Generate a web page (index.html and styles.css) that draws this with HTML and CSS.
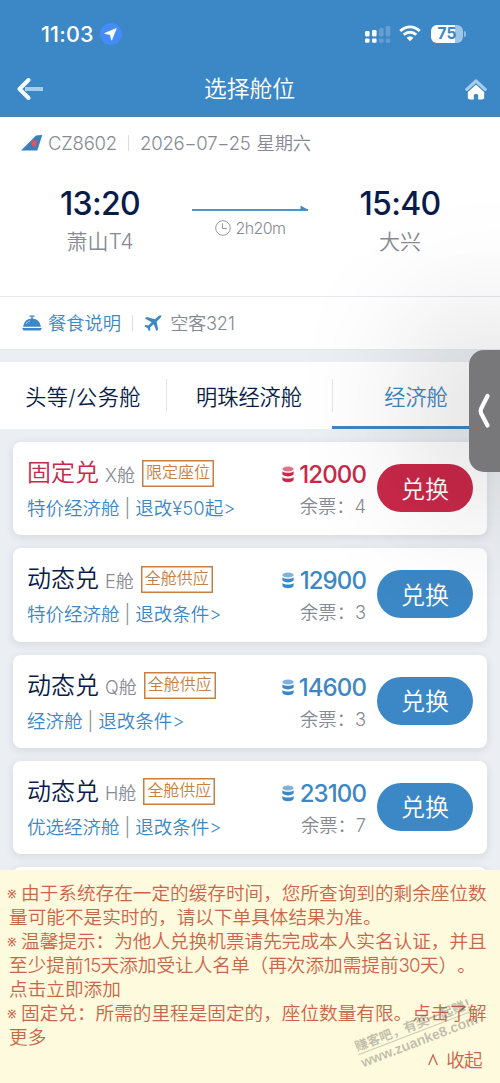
FILE: index.html
```html
<!DOCTYPE html>
<html lang="zh-CN">
<head>
<meta charset="utf-8">
<title>选择舱位</title>
<link rel="stylesheet" href="styles.css">
</head>
<body>
<svg class="defs" width="0" height="0">
  <symbol id="coins" viewBox="0 0 12 17">
    <ellipse cx="6" cy="3" rx="5.6" ry="2.5" opacity=".65"/>
    <path d="M.4 5.2C2.5 7.2 9.5 7.2 11.6 5.2V8.6C9.8 11 2.2 11 .4 8.6Z"/>
    <path d="M.4 10.9C2.5 12.9 9.5 12.9 11.6 10.9V14C9.8 16.9 2.2 16.9 .4 14Z"/>
  </symbol>
</svg>
<div class="app">
  <header class="header">
    <div class="status">
      <div class="clock"><span class="clock-text">11:03</span>
        <svg width="22" height="22" viewBox="0 0 22 22"><circle cx="11" cy="11" r="11" fill="#438cfa"/><path d="M16.2 5.6 4.6 10.4 10.3 11.5 11.6 17.2Z" fill="#fff" stroke="#fff" stroke-width=".8" stroke-linejoin="round"/></svg>
      </div>
      <svg class="signal" width="26" height="18" viewBox="0 0 26 18" fill="#fff"><rect x="0" y="6" width="4.6" height="5.4" rx="1.3"/><rect x="7" y="5" width="4.6" height="6.4" rx="1.3"/><rect x="0" y="13.4" width="4.6" height="4.4" rx="1.3"/><rect x="7" y="13.4" width="4.6" height="4.4" rx="1.3"/><g opacity=".2"><rect x="14" y="3" width="4.6" height="8.4" rx="1.3"/><rect x="20.7" y="1" width="4.6" height="10.4" rx="1.3"/><rect x="14" y="13.4" width="4.6" height="4.4" rx="1.3"/><rect x="20.7" y="13.4" width="4.6" height="4.4" rx="1.3"/></g></svg>
      <svg class="wifi" width="22" height="17" viewBox="0 0 22 17"><g fill="none" stroke="#fff" stroke-width="2.9"><path d="M1.2 6.1C6.8.4 15.2.4 20.8 6.1"/><path d="M4.8 9.8C8.4 6.3 13.6 6.3 17.2 9.8"/></g><path d="M7.6 12.7Q11 9.7 14.4 12.7L11 16.2Z" fill="#fff"/></svg>
      <div class="battery"><span>75</span></div>
      <i class="battery-tip"></i>
    </div>
    <div class="navbar">
      <svg width="27" height="22" viewBox="0 0 27 22" fill="none"><path d="M8 11H26" stroke="#a5cdec" stroke-width="4"/><path d="M11.500 2 2.500 11 11.500 20" stroke="#f4fcff" stroke-width="4" stroke-linecap="round" stroke-linejoin="round"/></svg>
      <h1>选择舱位</h1>
      <svg width="22" height="22" viewBox="0 0 22 22"><path d="M1.8 11.4 11 3 20.2 11.4" fill="none" stroke="#a5cdec" stroke-width="3.2" stroke-linecap="round" stroke-linejoin="round"/><path d="M11 6.8 19.2 14V19.5Q19.2 21.5 17.2 21.5H13.2V17.2Q13.2 16 11 16T8.8 17.2V21.5H4.8Q2.8 21.5 2.8 19.5V14Z" fill="#fff"/></svg>
    </div>
  </header>

  <section class="flight">
    <div class="flight-meta">
      <svg width="22" height="16" viewBox="0 0 22 16"><path d="M0 15.6 14 1.4Q15 .3 17 .2L21.3 0 16.3 15.6Z" fill="#3c80bb"/><path d="M10.5 6.5Q12.5 4 16 5.8L15.5 10 12.8 12.5Q10 10 10.5 6.5Z" fill="#d65567"/></svg>
      <span class="flight-no">CZ8602</span><i class="bar"></i><span class="date">2026−07−25 <b>星期六</b></span>
    </div>
    <div class="route">
      <div class="stop"><div class="time">13:20</div><div class="airport">萧山T4</div></div>
      <div class="leg">
        <svg width="117" height="8" viewBox="0 0 117 8"><path d="M0 6H116" stroke="#4c94ca" stroke-width="2"/><path d="M108.500 1.500 116.500 6H108.500Z" fill="#4189c2"/></svg>
        <div class="duration"><svg width="16" height="16" viewBox="0 0 16 16" fill="none" stroke="#999da3"><circle cx="8" cy="8" r="7.3"/><path d="M7.500 3.500V8.500H12"/></svg><span>2h20m</span></div>
      </div>
      <div class="stop"><div class="time">15:40</div><div class="airport">大兴</div></div>
    </div>
    <div class="services">
      <svg width="20" height="16" viewBox="0 0 20 16" fill="#3c87c5"><path d="M7.500 .5H12.500V1.700H10.700V3.500Q17.500 4 19 11.800H1Q2.500 4 9.300 3.500V1.700H7.500Z"/><path d="M0 13H20L18.500 15.500H1.500Z"/><path d="M4 9Q5.300 6.500 8 6" stroke="#a5cdec" fill="none"/></svg>
      <span class="meal">餐食说明</span><i class="bar"></i>
      <svg class="plane" width="18" height="17" viewBox="0 0 18 17" fill="#3c87c5"><path d="M17.500.3Q15 .2 12.800 2.400L11 4.200 2.600 2 1 3.500 7.700 7.200 4.200 10.600 1.600 10 .3 11.200 3.500 12.900 5 16.300 6.300 15 6 12.500 9.800 9.200 12.400 16 14.100 14.500 12.600 6.600 15.200 4.300Q17.600 2.300 17.500.3Z"/></svg>
      <span class="model">空客321</span>
    </div>
  </section>

  <nav class="tabs">
    <div class="tab first">头等/公务舱</div>
    <div class="tab">明珠经济舱</div>
    <div class="tab active">经济舱</div>
  </nav>

  <main class="list">
    <article class="card fixed">
      <div class="info"><div class="line"><h2>固定兑</h2><span class="cabin">X舱</span><span class="tag">限定座位</span></div><div class="terms">特价经济舱<i>|</i>退改¥50起&gt;</div></div>
      <div class="price"><div class="miles"><svg width="12" height="17"><use href="#coins"/></svg><span>12000</span></div><div class="left">余票：<b>4</b></div></div>
      <button class="redeem">兑换</button>
    </article>
    <article class="card">
      <div class="info"><div class="line"><h2>动态兑</h2><span class="cabin">E舱</span><span class="tag">全舱供应</span></div><div class="terms">特价经济舱<i>|</i>退改条件&gt;</div></div>
      <div class="price"><div class="miles"><svg width="12" height="17"><use href="#coins"/></svg><span>12900</span></div><div class="left">余票：<b>3</b></div></div>
      <button class="redeem">兑换</button>
    </article>
    <article class="card">
      <div class="info"><div class="line"><h2>动态兑</h2><span class="cabin">Q舱</span><span class="tag">全舱供应</span></div><div class="terms">经济舱<i>|</i>退改条件&gt;</div></div>
      <div class="price"><div class="miles"><svg width="12" height="17"><use href="#coins"/></svg><span>14600</span></div><div class="left">余票：<b>3</b></div></div>
      <button class="redeem">兑换</button>
    </article>
    <article class="card">
      <div class="info"><div class="line"><h2>动态兑</h2><span class="cabin">H舱</span><span class="tag">全舱供应</span></div><div class="terms">优选经济舱<i>|</i>退改条件&gt;</div></div>
      <div class="price"><div class="miles"><svg width="12" height="17"><use href="#coins"/></svg><span>23100</span></div><div class="left">余票：<b>7</b></div></div>
      <button class="redeem">兑换</button>
    </article>
    <article class="card"></article>
  </main>

  <footer class="notice">
    <p><i>※</i>由于系统存在一定的缓存时间，您所查询到的剩余座位数<br>量可能不是实时的，请以下单具体结果为准。</p>
    <p><i>※</i>温馨提示：为他人兑换机票请先完成本人实名认证，并且<br>至少提前<span>15</span>天添加受让人名单（再次添加需提前<span>30</span>天）。<br>点击立即添加</p>
    <p><i>※</i>固定兑：所需的里程是固定的，座位数量有限。点击了解<br>更多</p>
    <div class="collapse"><svg width="10" height="12" viewBox="0 0 10 12"><path d="M.7 11 5 1 9.300 11" fill="none" stroke="#cb6549" stroke-width="1.300"/></svg><span>收起</span></div>
    <div class="watermark"><div>赚客吧，有奖一起赚！</div><div class="site">www.zuanke8.com</div></div>
  </footer>
  <div class="shade"><div class="handle"><svg width="14" height="36" viewBox="0 0 14 36"><path d="M10.500 3 4.200 15.500Q3 18 4.200 20.500L10.500 32.500" fill="none" stroke="#fff" stroke-width="4.200" stroke-linecap="round" stroke-linejoin="round"/></svg></div></div>
</div>
</body>
</html>
```

FILE: styles.css
```css
* { box-sizing: border-box; }
body { margin: 0; font-family: Inter, "Noto Sans CJK SC", sans-serif; font-weight: 350; color: #858a93; text-spacing-trim: space-all; }
h1, h2, p { margin: 0; font-weight: inherit; }
i { font-style: normal; }
b { font-weight: inherit; }
svg { flex: none; display: block; }
.defs { position: absolute; }
.app { position: relative; width: 500px; height: 1083px; overflow: hidden; background: #ebeef2; display: flex; flex-direction: column; white-space: nowrap; }

.header { height: 117px; flex: none; background: #3c87c5; border-bottom: 1px solid #4c83b0; color: #fff; }
.status { height: 67px; display: flex; align-items: center; padding: 0 34px 0 41px; }
.clock { flex: 1; display: flex; align-items: center; gap: 5px; }
.clock-text { width: 54px; font-size: 21.500px; font-weight: 550; letter-spacing: .2px; }
.signal { margin-right: 8px; }
.wifi { margin-right: 10px; }
.battery { width: 32px; height: 18px; border-radius: 6px; background: linear-gradient(90deg, #fff 75%, #9cc5e6 75%); color: #3c87c5; font-size: 15.500px; font-weight: 700; line-height: 18px; text-align: center; }
.battery-tip { width: 2px; height: 6px; margin-left: 1px; border-radius: 0 2px 2px 0; background: #8cbce1; }
.navbar { height: 44px; display: grid; grid-template-columns: 27px 1fr 22px; align-items: center; padding: 0 13px 0 17px; }
.navbar h1 { font-size: 22.800px; line-height: 30px; text-align: center; padding-right: 10px; }

.flight { height: 233px; flex: none; background: #fff; border-bottom: 1px solid #e6e9ed; }
.flight-meta { height: 51px; display: flex; align-items: center; padding-left: 21px; font-size: 18.500px; }
.flight-no { margin-left: 5px; width: 69px; letter-spacing: -.2px; }
.bar { width: 1px; height: 16px; background: #dadde4; margin: 0 11px; }
.date { margin-top: -2px; letter-spacing: -.2px; }
.date b { margin-left: 1px; font-size: 18.300px; }
.route { height: 128px; padding: 16px 38px 0; display: flex; justify-content: space-between; }
.stop { width: 124px; text-align: center; }
.time { color: #091b49; font-size: 32px; line-height: 39px; font-weight: 480; letter-spacing: -.7px; }
.airport { font-size: 21px; line-height: 38px; }
.leg { width: 117px; padding-top: 20px; }
.duration { display: flex; align-items: center; justify-content: center; gap: 5px; font-size: 16px; line-height: 20px; margin-top: 6px; }
.duration span { letter-spacing: -.6px; }
.services { height: 53px; border-top: 1px solid #e6e9ed; display: flex; align-items: center; padding-left: 22px; font-size: 18.300px; }
.services span { margin-top: -2px; }
.services .meal { color: #3c87c5; margin-left: 6px; }
.model { letter-spacing: -.3px; }
.plane { margin-right: 8px; }

.tabs { margin-top: 12px; height: 67px; flex: none; display: grid; grid-template-columns: 166px 166px 168px; background: #fff; }
.tab { position: relative; display: flex; align-items: center; justify-content: center; color: #091b49; font-size: 21.200px; padding-bottom: 1px; }
.tab.first { letter-spacing: .4px; }
.tab + .tab::before { content: ""; position: absolute; left: 0; top: 17px; width: 1px; height: 33px; background: #e2e5ea; }
.tab.active { color: #3c87c5; box-shadow: inset 0 -3px #3c87c5; }

.list { height: 441px; flex: none; overflow: hidden; padding: 13px; display: flex; flex-direction: column; gap: 13px; }
.card { height: 93.300px; flex: none; display: flex; background: #fff; border-radius: 8px; padding: 0 14px; box-shadow: 0 2px 8px rgba(40, 60, 80, .12); --tone: #3c87c5; }
.card.fixed { --tone: #c92849; }
.info { flex: 1; padding-top: 14px; }
.line { height: 34px; display: flex; align-items: center; }
.line h2 { font-size: 24px; line-height: 34px; color: #091b49; }
.fixed h2 { color: var(--tone); }
.cabin { font-size: 18px; margin: 1px 7px 0 6px; }
.tag { height: 27px; padding: 0 4px; box-shadow: inset 0 0 0 1.500px #c77f43; color: #c77f43; font-size: 16px; line-height: 25px; }
.terms { color: #3c87c5; font-size: 18.500px; line-height: 34px; margin-top: 1px; }
.terms i { color: #858a93; margin: 0 5px; }
.price { width: 90px; margin-right: 11px; padding-top: 17px; text-align: right; }
.miles { height: 31px; display: flex; align-items: center; justify-content: flex-end; gap: 4px; color: var(--tone); fill: var(--tone); font-size: 24px; font-weight: 460; }
.miles span { letter-spacing: -.9px; width: 68px; }
.left { font-size: 18.300px; line-height: 32px; }
.redeem { width: 96px; height: 48px; margin: 22px 0 0; padding: 0 0 2px; border: 0; border-radius: 24px; background: var(--tone); color: #fff; font: inherit; font-size: 24px; }

.notice { position: relative; height: 213px; flex: none; padding: 11px 9px 0; background: #fefadd; color: #cb6549; font-size: 18.640px; line-height: 24px; }
.notice i { display: inline-block; width: 14px; margin-left: -2px; font-size: 17px; line-height: 20px; }
.notice span { letter-spacing: -.7px; }
.collapse { display: flex; align-items: center; justify-content: flex-end; gap: 8px; padding-right: 9px; margin-top: -1px; }
.watermark { position: absolute; left: 354px; top: 145px; transform: rotate(-21deg); font-size: 13px; line-height: 16px; font-weight: 700; color: rgba(90, 90, 90, .38); }
.watermark .site { border-top: 1px solid rgba(90, 90, 90, .3); font-family: "Liberation Sans", sans-serif; font-size: 14px; }

.shade { position: absolute; left: 0; top: 117px; width: 500px; height: 753px; overflow: hidden; pointer-events: none; }
.handle { position: absolute; left: 469px; top: 233px; width: 50px; height: 122px; border-radius: 15px; background: #78787a; box-shadow: 0 0 150px 15px rgba(0, 0, 0, .32); display: flex; align-items: center; padding-left: 8px; }
```
